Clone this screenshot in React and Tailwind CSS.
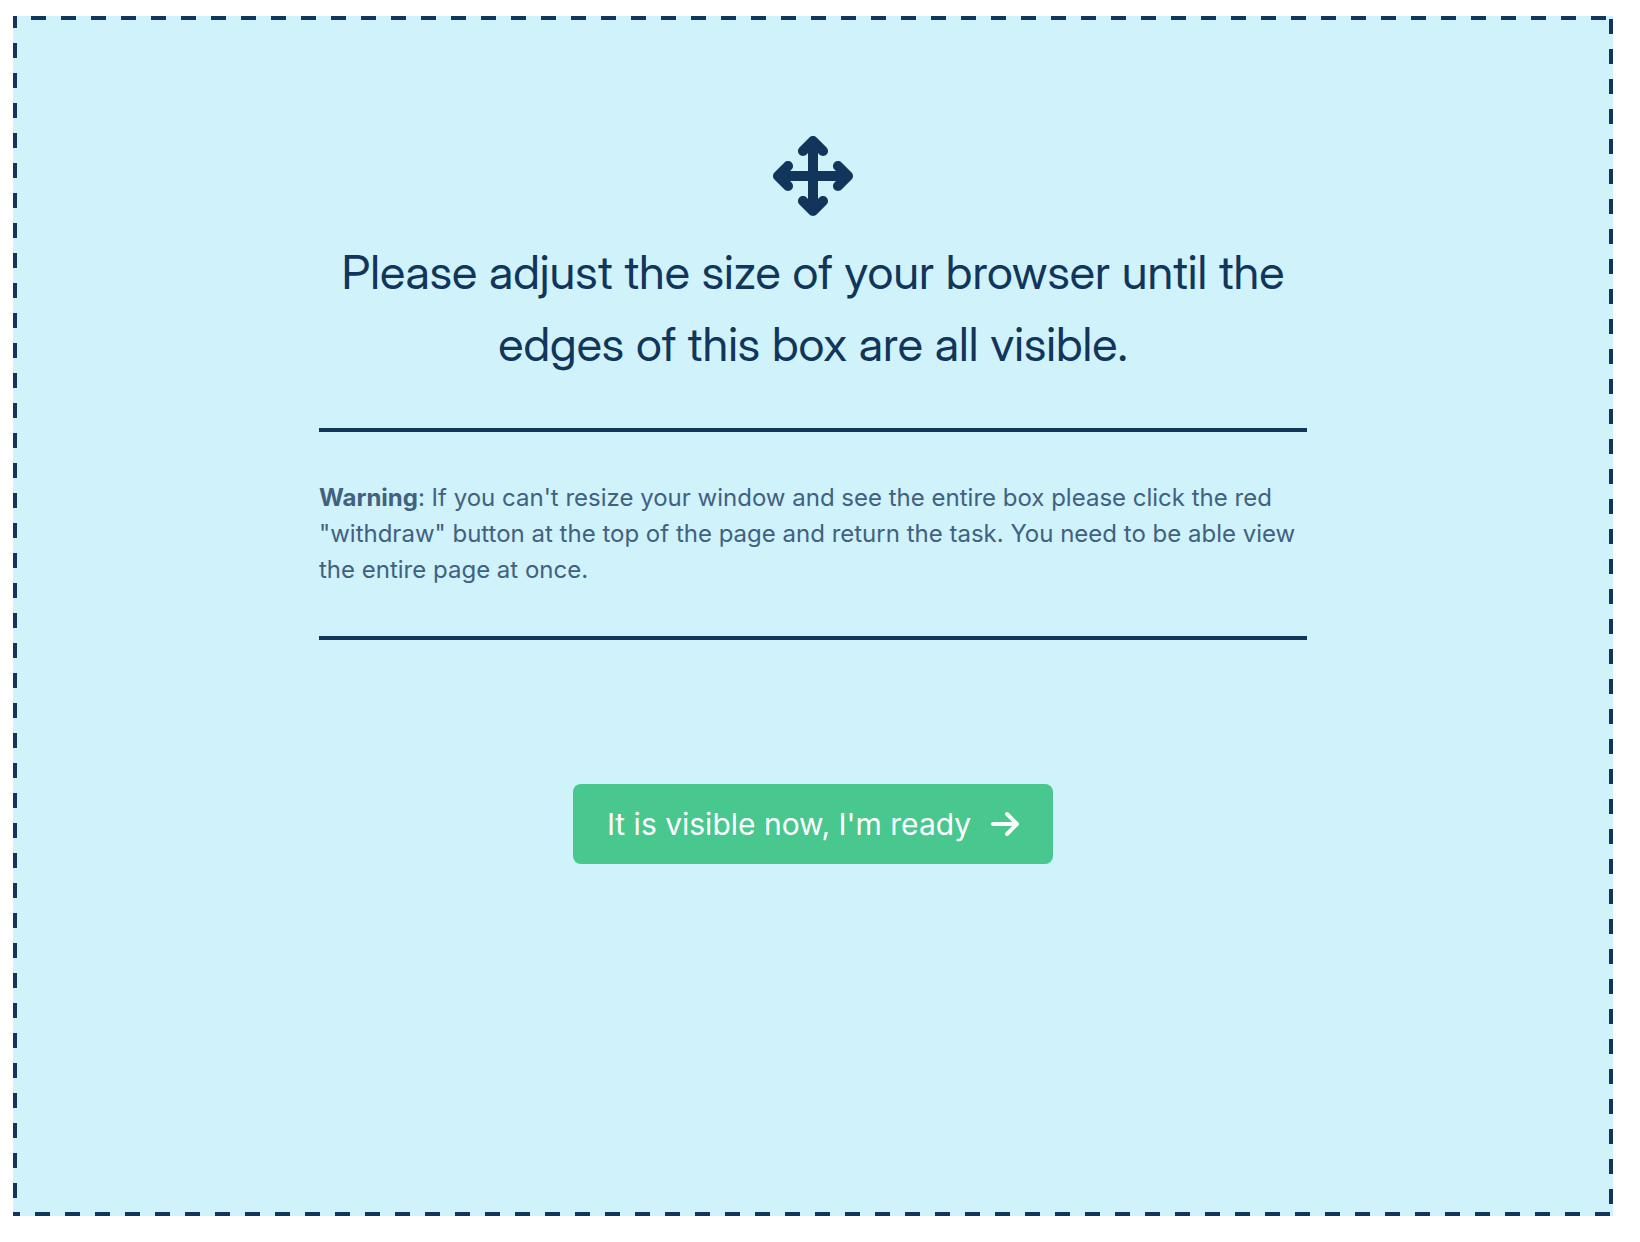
import { FaArrowRight, FaArrowsUpDownLeftRight } from "react-icons/fa6";

export default function App() {
  return (
    <main className="min-h-screen bg-white pt-4 pr-[27px] pb-[26px] pl-[13px] font-[Inter,sans-serif] text-[#12355b]">
      <section className="min-h-[1200px] bg-[#cff2fb] bg-[image:linear-gradient(90deg,#12355b_50%,transparent_50%),linear-gradient(90deg,#12355b_50%,transparent_50%),linear-gradient(0deg,transparent_50%,#12355b_50%),linear-gradient(0deg,transparent_50%,#12355b_50%)] bg-[size:30px_4px,30px_4px,4px_30px,4px_30px] bg-[position:18px_0,22px_100%,0_-3px,100%_3px] [background-repeat:repeat-x,repeat-x,repeat-y,repeat-y] px-6 pt-[120px] pb-24">
        <div className="mx-auto flex max-w-[988px] flex-col items-center">
          <FaArrowsUpDownLeftRight className="size-20" aria-hidden="true" />
          <h1 className="mt-5 text-center font-['Inter_Display',Inter,sans-serif] text-[47px] leading-[72px]">
            Please adjust the size of your browser until the edges of this box are all visible.
          </h1>
          <div className="mt-12 w-full border-y-4 border-[#12355b] py-12">
            <p className="text-2xl leading-9 text-[#426080] [font-feature-settings:'calt'_0]">
              <strong className="font-bold">Warning</strong>: If you can't resize your window and see the entire box
              please click the red "withdraw" button at the top of the page and return the task. You need to be able
              view the entire page at once.
            </p>
          </div>
          <button
            type="button"
            className="mt-36 flex h-20 items-center gap-5 rounded-lg bg-[#48c78e] px-[34px] text-[30px] text-white"
          >
            <span>It is visible now, I'm ready</span>
            <FaArrowRight className="h-8 w-7" aria-hidden="true" />
          </button>
        </div>
      </section>
    </main>
  );
}
